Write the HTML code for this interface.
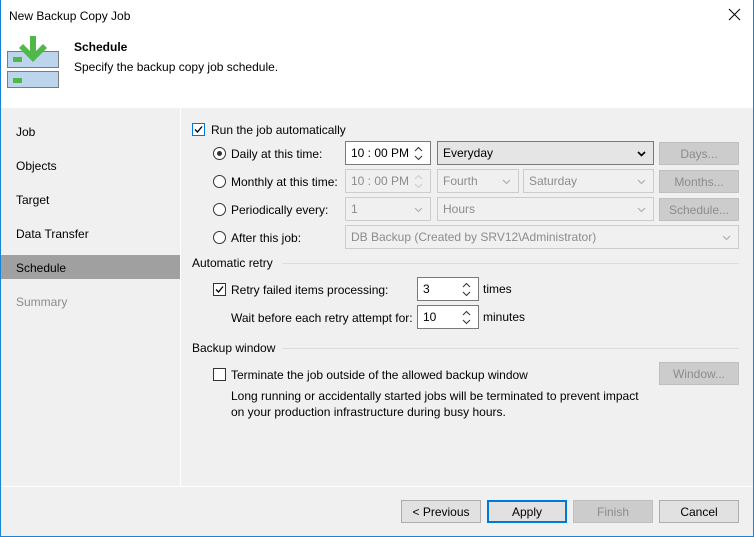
<!DOCTYPE html>
<html><head><style>
*{box-sizing:border-box;margin:0;padding:0}
body{width:754px;height:537px;overflow:hidden;font-family:"Liberation Sans",sans-serif;font-size:12px;color:#000;background:#f0f0f0;position:relative}
.a{position:absolute}
.t{position:absolute;white-space:nowrap;line-height:14px}
.g{color:#8c8c8c}
.box{position:absolute;border:1px solid #adadad;background:#fff;height:24px;line-height:23px;padding-left:5px}
.dis{background:#f0f0f0;border-color:#cccccc;color:#8c8c8c}
.btn{position:absolute;border:1px solid #adadad;background:#e1e1e1;text-align:center;line-height:22px;height:23px;width:80px}
.bd{background:#cccccc;border-color:#bfbfbf;color:#8c8c8c}
.cb{position:absolute;width:13px;height:13px;border:1px solid #333;background:#fff}
.rd{position:absolute;width:13px;height:13px;border:1px solid #333;border-radius:50%;background:#fff}
.ch{position:absolute;right:7px;top:9px}
.sp{position:absolute;right:7px;top:4px}
</style></head><body>
<div class="a" style="left:0;top:0;width:754px;height:108px;background:#fff"></div>
<div class="a" style="left:0;top:0;width:1px;height:537px;background:#1883d7"></div>
<div class="a" style="right:0;top:0;width:1px;height:537px;background:#1883d7"></div>
<div class="a" style="left:0;bottom:0;width:754px;height:1px;background:#1883d7"></div>
<div class="t" style="left:9px;top:9px">New Backup Copy Job</div>
<svg class="a" style="left:728px;top:8px" width="14" height="14"><path d="M1 1L12 12M12 1L1 12" stroke="#000" stroke-width="1"/></svg>
<svg class="a" style="left:7px;top:36px" width="52" height="53">
<rect x="0.5" y="15.5" width="51" height="16" fill="#bcd5ec" stroke="#7a7a7a"/>
<rect x="0.5" y="35.5" width="51" height="16" fill="#bcd5ec" stroke="#7a7a7a"/>
<rect x="6" y="21" width="9" height="5" fill="#4fb848"/>
<rect x="6" y="42" width="9" height="5" fill="#4fb848"/>
<path d="M23 0h6v15l7-7 4 4-14 14-14-14 4-4 7 7z" fill="#4fb848"/>
</svg>
<div class="t" style="left:74px;top:40px;font-weight:bold">Schedule</div>
<div class="t" style="left:74px;top:60px">Specify the backup copy job schedule.</div>
<div class="a" style="left:180px;top:108px;width:1px;height:379px;background:#fff"></div>
<div class="a" style="left:1px;top:486px;width:752px;height:1px;background:#fff"></div>
<div class="t" style="left:16px;top:125px">Job</div>
<div class="t" style="left:16px;top:159px">Objects</div>
<div class="t" style="left:16px;top:193px">Target</div>
<div class="t" style="left:16px;top:227px">Data Transfer</div>
<div class="a" style="left:1px;top:255px;width:179px;height:24px;background:#a0a0a0"></div>
<div class="t" style="left:16px;top:261px">Schedule</div>
<div class="t g" style="left:16px;top:295px">Summary</div>

<div class="cb" style="left:192px;top:123px;border-color:#0078d7"></div>
<svg class="a" style="left:192px;top:123px" width="13" height="13"><path d="M3 6.5l2.5 2.5 4.5-5.5" stroke="#000" stroke-width="1.3" fill="none"/></svg>
<div class="t" style="left:211px;top:123px">Run the job automatically</div>
<div class="rd" style="left:213px;top:147px"></div><div class="a" style="left:217px;top:151px;width:5px;height:5px;border-radius:50%;background:#333"></div>
<div class="t" style="left:231px;top:147px">Daily at this time:</div>
<div class="rd" style="left:213px;top:175px"></div><div class="t" style="left:231px;top:175px">Monthly at this time:</div>
<div class="rd" style="left:213px;top:203px"></div><div class="t" style="left:231px;top:203px">Periodically every:</div>
<div class="rd" style="left:213px;top:231px"></div><div class="t" style="left:231px;top:231px">After this job:</div>

<div class="box" style="left:345px;top:141px;width:86px;border-color:#7a7a7a">10 : 00 PM<svg class="sp" width="9" height="15"><path d="M1 5l3.5-3.5L8 5M1 10l3.5 3.5L8 10" stroke="#333" fill="none"/></svg></div>
<div class="box" style="left:437px;top:141px;width:217px;background:#e5e5e5;border-color:#7a7a7a">Everyday<svg class="ch" width="9" height="6"><path d="M1 1l3.5 3.5L8 1" stroke="#000" stroke-width="1.6" fill="none"/></svg></div>
<div class="btn bd" style="left:659px;top:142px">Days...</div>
<div class="box dis" style="left:345px;top:169px;width:86px">10 : 00 PM<svg class="sp" width="9" height="15"><path d="M1 5l3.5-3.5L8 5M1 10l3.5 3.5L8 10" stroke="#ccc" fill="none"/></svg></div>
<div class="box dis" style="left:437px;top:169px;width:82px">Fourth<svg class="ch" width="9" height="6"><path d="M1 1l3.5 3.5L8 1" stroke="#aaa" fill="none"/></svg></div>
<div class="box dis" style="left:523px;top:169px;width:131px">Saturday<svg class="ch" width="9" height="6"><path d="M1 1l3.5 3.5L8 1" stroke="#aaa" fill="none"/></svg></div>
<div class="btn bd" style="left:659px;top:170px">Months...</div>
<div class="box dis" style="left:345px;top:197px;width:86px">1<svg class="ch" width="9" height="6"><path d="M1 1l3.5 3.5L8 1" stroke="#aaa" fill="none"/></svg></div>
<div class="box dis" style="left:437px;top:197px;width:217px">Hours<svg class="ch" width="9" height="6"><path d="M1 1l3.5 3.5L8 1" stroke="#aaa" fill="none"/></svg></div>
<div class="btn bd" style="left:659px;top:198px">Schedule...</div>
<div class="box dis" style="left:345px;top:225px;width:394px">DB Backup (Created by SRV12\Administrator)<svg class="ch" width="9" height="6"><path d="M1 1l3.5 3.5L8 1" stroke="#aaa" fill="none"/></svg></div>

<div class="t" style="left:192px;top:256px">Automatic retry</div>
<div class="a" style="left:282px;top:263px;width:457px;height:1px;background:#dcdcdc"></div>
<div class="cb" style="left:213px;top:283px"></div>
<svg class="a" style="left:213px;top:283px" width="13" height="13"><path d="M3 6.5l2.5 2.5 4.5-5.5" stroke="#000" stroke-width="1.3" fill="none"/></svg>
<div class="t" style="left:231px;top:283px">Retry failed items processing:</div>
<div class="box" style="left:417px;top:277px;width:62px;border-color:#7a7a7a">3<svg class="sp" width="9" height="15"><path d="M1 5l3.5-3.5L8 5M1 10l3.5 3.5L8 10" stroke="#333" fill="none"/></svg></div>
<div class="t" style="left:483px;top:282px">times</div>
<div class="t" style="left:231px;top:311px">Wait before each retry attempt for:</div>
<div class="box" style="left:417px;top:305px;width:62px;border-color:#7a7a7a">10<svg class="sp" width="9" height="15"><path d="M1 5l3.5-3.5L8 5M1 10l3.5 3.5L8 10" stroke="#333" fill="none"/></svg></div>
<div class="t" style="left:483px;top:310px">minutes</div>
<div class="t" style="left:192px;top:341px">Backup window</div>
<div class="a" style="left:282px;top:348px;width:457px;height:1px;background:#dcdcdc"></div>
<div class="cb" style="left:213px;top:368px"></div>
<div class="t" style="left:231px;top:368px">Terminate the job outside of the allowed backup window</div>
<div class="btn bd" style="left:659px;top:362px">Window...</div>
<div class="t" style="left:231px;top:389px">Long running or accidentally started jobs will be terminated to prevent impact</div>
<div class="t" style="left:231px;top:405px">on your production infrastructure during busy hours.</div>

<div class="btn" style="left:401px;top:500px">&lt; Previous</div>
<div class="btn" style="left:487px;top:500px;border:2px solid #0078d7;line-height:20px">Apply</div>
<div class="btn bd" style="left:573px;top:500px">Finish</div>
<div class="btn" style="left:659px;top:500px">Cancel</div>
</body></html>
